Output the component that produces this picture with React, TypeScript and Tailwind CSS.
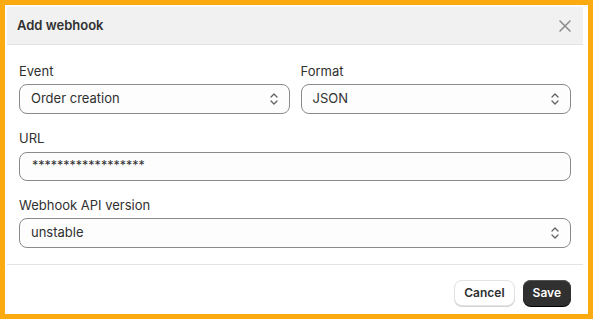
import { useState } from 'react';

const FONT = { fontFamily: 'Inter, "Noto Sans", sans-serif' };

function Chevrons() {
  return (
    <svg width="10" height="16" viewBox="0 0 10 16" fill="none" className="shrink-0">
      <path d="M2 6 L5 3 L8 6" stroke="#616161" strokeWidth="1.3" strokeLinecap="round" strokeLinejoin="round" />
      <path d="M2 10 L5 13 L8 10" stroke="#616161" strokeWidth="1.3" strokeLinecap="round" strokeLinejoin="round" />
    </svg>
  );
}

function SelectField({ label, value }: { label: string; value: string }) {
  return (
    <div className="flex flex-col">
      <label className="text-[13px] leading-[20px] text-[#303030] mb-[3px]">{label}</label>
      <div className="h-[30px] rounded-[8px] border border-[#8a8a8a] bg-[#fdfdfd] flex items-center justify-between pl-[11px] pr-[10px]">
        <span className="text-[13px] text-[#303030]">{value}</span>
        <Chevrons />
      </div>
    </div>
  );
}

export default function App() {
  const [url] = useState('******************');

  return (
    <div className="w-[593px] h-[319px] bg-white border-[5px] border-[#fbaa0f] pl-[2px] pt-[2px] pr-[5px] pb-[2px]" style={FONT}>
      <div className="h-full flex flex-col bg-white">
        {/* Header */}
        <div className="h-[38px] shrink-0 bg-[#f1f1f1] border-b border-[#e3e3e3] flex items-center justify-between pl-[10px] pr-[12px]">
          <h2 className="text-[13px] font-semibold text-[#303030]">Add webhook</h2>
          <svg width="12" height="12" viewBox="0 0 12 12" fill="none">
            <path d="M1 1 L11 11 M11 1 L1 11" stroke="#8a8a8a" strokeWidth="1.5" strokeLinecap="round" />
          </svg>
        </div>

        {/* Body */}
        <div className="px-[12px] pt-[16px] pb-[16px] border-b border-[#e3e3e3] flex flex-col gap-[14px]">
          <div className="grid grid-cols-2 gap-x-[11px]">
            <SelectField label="Event" value="Order creation" />
            <SelectField label="Format" value="JSON" />
          </div>
          <div className="flex flex-col">
            <label className="text-[13px] leading-[20px] text-[#303030] mb-[4px]">URL</label>
            <div className="h-[29px] rounded-[8px] border border-[#8a8a8a] bg-[#fdfdfd] flex items-center pl-[12px]">
              <span className="text-[12.5px] text-[#303030]">{url}</span>
            </div>
          </div>
          <SelectField label="Webhook API version" value="unstable" />
        </div>

        {/* Footer */}
        <div className="flex justify-end items-start gap-[8px] pt-[15px] px-[12px]">
          <button className="h-[26px] px-[9px] rounded-[8px] border border-[#e3e3e3] bg-white text-[12px] font-semibold text-[#303030] shadow-[0_1px_0_#d4d4d4]">
            Cancel
          </button>
          <button className="h-[26px] px-[10px] rounded-[8px] bg-[#303030] text-[12px] font-semibold text-white shadow-[inset_0_1px_0_#555,0_1px_0_#000]">
            Save
          </button>
        </div>
      </div>
    </div>
  );
}
